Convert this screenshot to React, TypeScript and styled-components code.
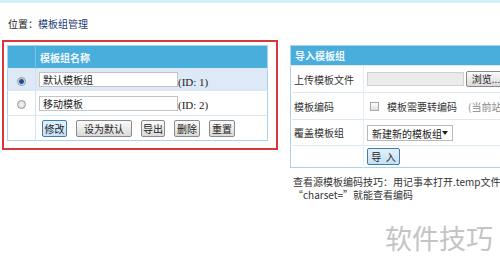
import React from 'react';
import styled, { createGlobalStyle } from 'styled-components';

const GlobalStyle = createGlobalStyle`
  html, body {
    margin: 0;
    padding: 0;
    background: #fff;
  }
  body {
    font-family: "Noto Sans CJK SC", "Noto Sans", sans-serif;
    font-size: 10px;
    color: #333;
    overflow: hidden;
  }
`;

const Page = styled.div`
  position: relative;
  width: 500px;
  height: 276px;
  overflow: hidden;
`;

// bande bleue claire en haut
const TopStrip = styled.div`
  height: 3px;
  background: #d6eff8;
`;

const Breadcrumb = styled.div`
  box-sizing: border-box;
  height: 37px;
  padding: 14px 0 0 8px;
  line-height: 14px;
  font-size: 10px;
  color: #222;

  span {
    color: #1d3a78;
  }
`;

const Main = styled.div`
  display: flex;
  align-items: flex-start;
  gap: 12px;
  padding-left: 2px;
`;

// cadre rouge autour de la liste
const Highlight = styled.div`
  flex-shrink: 0;
  box-sizing: border-box;
  width: 276px;
  height: 110px;
  padding: 3px;
  border: 2px solid #d8373c;
`;

const Grid = styled.table<{ $width: number }>`
  width: ${p => p.$width}px;
  border-collapse: collapse;
  border: 1px solid #a9d3ea;
  table-layout: fixed;
  font-size: 10px;
  white-space: nowrap;
`;

const Col = styled.col<{ $w?: number }>`
  width: ${p => (p.$w ? `${p.$w}px` : 'auto')};
`;

const HeadCell = styled.th<{ $split?: boolean }>`
  height: ${p => (p.$split ? 22 : 19)}px;
  padding: 0 0 0 4px;
  background: #4aaedc;
  color: #f4faff;
  font-weight: bold;
  text-align: left;
  border-right: ${p => (p.$split ? '1px solid #7cc4e6' : 'none')};
`;

const Row = styled.tr<{ $h: number; $alt?: boolean }>`
  height: ${p => p.$h}px;
  background: ${p => (p.$alt ? '#dde9f6' : '#fff')};
  border-top: 1px solid #dbe9f3;
`;

const SideCell = styled.td`
  padding: 0;
  text-align: center;
  border-right: 1px solid #d3e5f1;
`;

const Cell = styled.td<{ $pad?: number }>`
  padding: 0 0 0 ${p => p.$pad ?? 3}px;
  overflow: hidden;
`;

const LabelCell = styled.td`
  padding: 0 0 0 3px;
  color: #333;
  border-right: 1px solid #e2eef6;
`;

const Radio = styled.span<{ $checked?: boolean }>`
  display: inline-block;
  box-sizing: border-box;
  width: 9px;
  height: 9px;
  border-radius: 50%;
  border: 1px solid #9a9a9a;
  background: ${p =>
    p.$checked
      ? 'radial-gradient(circle, #1f4f8f 0 2px, #8fb0d3 2.5px, #e8eef5 3.5px)'
      : 'radial-gradient(circle, #f6f6f6, #d2d2d2)'};
  vertical-align: middle;
`;

const Line = styled.div`
  display: flex;
  align-items: center;
`;

const NameInput = styled.input`
  box-sizing: border-box;
  width: 139px;
  height: 15px;
  margin: 0;
  padding: 0 3px;
  border: 1px solid #c4c4c4;
  background: #fff;
  font-family: "Noto Sans CJK SC", sans-serif;
  font-size: 10px;
  color: #222;
  outline: none;
`;

const IdTag = styled.span`
  margin: 4px 0 0 0;
  font-family: "Liberation Serif", serif;
  font-size: 11px;
  color: #222;
`;

const ButtonRow = styled.div`
  display: flex;
  align-items: center;
  gap: 9px;
  padding-left: 3px;
`;

const Btn = styled.button<{ $w: number; $primary?: boolean }>`
  flex-shrink: 0;
  box-sizing: border-box;
  width: ${p => p.$w}px;
  height: 17px;
  margin: 0;
  padding: 0;
  border: 1px solid ${p => (p.$primary ? '#3f7fb0' : '#8a8a8a')};
  border-radius: 2px;
  background: ${p =>
    p.$primary
      ? 'linear-gradient(#e2f1fb, #c4e0f3)'
      : 'linear-gradient(#fbfbfb, #dadada)'};
  font-family: "Noto Sans CJK SC", sans-serif;
  font-size: 10px;
  line-height: 15px;
  color: #222;
  white-space: pre;
`;

const RightPanel = styled.div`
  flex-shrink: 0;
  margin-top: 5px;
`;

const FileBox = styled.span`
  flex-shrink: 0;
  box-sizing: border-box;
  width: 97px;
  height: 14px;
  border: 1px solid #d0d0d0;
  background: #ebebeb;
`;

const SmallBtn = styled(Btn)`
  height: 16px;
  line-height: 14px;
  margin-left: 2px;
`;

const CheckBox = styled.span`
  flex-shrink: 0;
  box-sizing: border-box;
  width: 9px;
  height: 9px;
  margin: 0 8px 0 3px;
  border: 1px solid #a8a8a8;
  background: linear-gradient(#fdfdfd, #dedede);
`;

const Note = styled.span`
  margin-left: 11px;
  color: #888;
`;

const SelectBox = styled.span`
  display: inline-flex;
  align-items: center;
  justify-content: space-between;
  box-sizing: border-box;
  width: 86px;
  height: 16px;
  padding: 0 4px;
  border: 1px solid #b8b8b8;
  background: #fff;
  color: #222;
  vertical-align: middle;

  &::after {
    content: '';
    border-left: 3px solid transparent;
    border-right: 3px solid transparent;
    border-top: 4px solid #222;
  }
`;

const Hint = styled.div`
  margin-top: 7px;
  padding-left: 3px;
  font-size: 10px;
  line-height: 13px;
  color: #333;
  white-space: nowrap;
`;

const Watermark = styled.div`
  position: absolute;
  left: 385px;
  top: 224px;
  font-size: 27px;
  line-height: 27px;
  color: #c4c4c4;
  white-space: nowrap;
`;

const templates = [
  { id: 1, name: '默认模板组', checked: true },
  { id: 2, name: '移动模板', checked: false },
];

const actions = [
  { label: '修改', w: 25, primary: true },
  { label: '设为默认', w: 56 },
  { label: '导出', w: 24 },
  { label: '删除', w: 26 },
  { label: '重置', w: 26 },
];

export default function App() {
  return (
    <Page>
      <GlobalStyle />
      <TopStrip />
      <Breadcrumb>
        位置：<span>模板组管理</span>
      </Breadcrumb>

      <Main>
        <Highlight>
          <Grid $width={261}>
            <colgroup>
              <Col $w={28} />
              <Col />
            </colgroup>
            <thead>
              <tr>
                <HeadCell $split />
                <HeadCell>模板组名称</HeadCell>
              </tr>
            </thead>
            <tbody>
              {templates.map((t, i) => (
                <Row key={t.id} $h={i === 0 ? 22 : 25} $alt={i === 0}>
                  <SideCell>
                    <Radio $checked={t.checked} />
                  </SideCell>
                  <Cell>
                    <Line>
                      <NameInput readOnly defaultValue={t.name} />
                      <IdTag>(ID: {t.id})</IdTag>
                    </Line>
                  </Cell>
                </Row>
              ))}
              <Row $h={25}>
                <SideCell />
                <Cell>
                  <ButtonRow>
                    {actions.map(a => (
                      <Btn key={a.label} $w={a.w} $primary={a.primary}>
                        {a.label}
                      </Btn>
                    ))}
                  </ButtonRow>
                </Cell>
              </Row>
            </tbody>
          </Grid>
        </Highlight>

        <RightPanel>
          <Grid $width={300}>
            <colgroup>
              <Col $w={73} />
              <Col />
            </colgroup>
            <thead>
              <tr>
                <HeadCell colSpan={2}>导入模板组</HeadCell>
              </tr>
            </thead>
            <tbody>
              <Row $h={27}>
                <LabelCell>上传模板文件</LabelCell>
                <Cell>
                  <Line>
                    <FileBox />
                    <SmallBtn $w={40}>浏览...</SmallBtn>
                  </Line>
                </Cell>
              </Row>
              <Row $h={27}>
                <LabelCell>模板编码</LabelCell>
                <Cell>
                  <Line>
                    <CheckBox />
                    模板需要转编码
                    <Note>(当前站点编码：UTF-8)</Note>
                  </Line>
                </Cell>
              </Row>
              <Row $h={26}>
                <LabelCell>覆盖模板组</LabelCell>
                <Cell>
                  <SelectBox>新建新的模板组</SelectBox>
                </Cell>
              </Row>
              <Row $h={22}>
                <LabelCell />
                <Cell>
                  <Btn $w={33} $primary>
                    {'导  入'}
                  </Btn>
                </Cell>
              </Row>
            </tbody>
          </Grid>
          <Hint>
            查看源模板编码技巧：用记事本打开.temp文件，搜索
            <br />
            “charset=”就能查看编码
          </Hint>
        </RightPanel>
      </Main>

      <Watermark>软件技巧</Watermark>
    </Page>
  );
}
